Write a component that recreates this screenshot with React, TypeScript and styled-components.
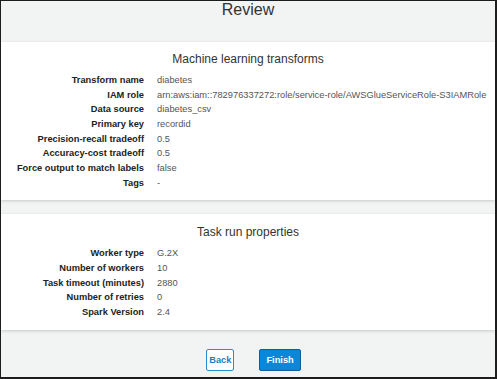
import React from 'react'
import styled, { createGlobalStyle } from 'styled-components'

const GlobalStyle = createGlobalStyle`
  body {
    margin: 0;
    font-family: "Liberation Sans", Arial, sans-serif;
    color: #333;
  }
`

const Frame = styled.div`
  box-sizing: border-box;
  width: 497px;
  height: 379px;
  border-style: solid;
  border-color: #1d1d1d;
  border-width: 1px 2px 2px 1px;
  background: #f2f3f3;
  overflow: hidden;
  display: flex;
  flex-direction: column;
`

const Header = styled.div`
  height: 41px;
  padding-top: 1px;
  box-sizing: border-box;
  text-align: center;
  font-size: 16px;
  line-height: 16px;
  color: #333;
`

const Card = styled.section<{ $top: number }>`
  background: #fff;
  padding: ${(p) => p.$top}px 0 10px;
  box-shadow: 0 1px 3px rgba(0, 0, 0, 0.18);
  & + & {
    margin-top: 14px;
  }
`

const CardTitle = styled.h2`
  margin: 0 0 7px;
  text-align: center;
  font-size: 12px;
  line-height: 14px;
  font-weight: normal;
  color: #333;
`

const Details = styled.dl`
  margin: 0;
  display: grid;
  grid-template-columns: 143px 1fr;
  column-gap: 13px;
  font-size: 9.3px;
  line-height: 14.65px;
`

const Label = styled.dt`
  text-align: right;
  font-weight: bold;
  color: #222;
  white-space: nowrap;
`

const Value = styled.dd`
  margin: 0;
  color: #555;
  white-space: nowrap;
`

const Footer = styled.div`
  display: flex;
  justify-content: center;
  gap: 25px;
  padding-top: 19px;
  padding-left: 11px;
`

const Button = styled.button<{ $primary?: boolean }>`
  box-sizing: border-box;
  height: 22px;
  padding: 0 ${(p) => (p.$primary ? 6 : 2)}px;
  font-family: "Liberation Sans", Arial, sans-serif;
  font-size: 9.3px;
  font-weight: bold;
  border-radius: 2px;
  border: 1px solid ${(p) => (p.$primary ? '#0b5f9e' : '#2a8fd0')};
  background: ${(p) => (p.$primary ? '#0a87d8' : '#fff')};
  color: ${(p) => (p.$primary ? '#fff' : '#1b7fc4')};
`

const transforms: [string, string][] = [
  ['Transform name', 'diabetes'],
  ['IAM role', 'arn:aws:iam::782976337272:role/service-role/AWSGlueServiceRole-S3IAMRole'],
  ['Data source', 'diabetes_csv'],
  ['Primary key', 'recordid'],
  ['Precision-recall tradeoff', '0.5'],
  ['Accuracy-cost tradeoff', '0.5'],
  ['Force output to match labels', 'false'],
  ['Tags', '-'],
]

const taskRun: [string, string][] = [
  ['Worker type', 'G.2X'],
  ['Number of workers', '10'],
  ['Task timeout (minutes)', '2880'],
  ['Number of retries', '0'],
  ['Spark Version', '2.4'],
]

const Section = ({ title, rows, top }: { title: string; rows: [string, string][]; top: number }) => (
  <Card $top={top}>
    <CardTitle>{title}</CardTitle>
    <Details>
      {rows.map(([k, v]) => (
        <React.Fragment key={k}>
          <Label>{k}</Label>
          <Value>{v}</Value>
        </React.Fragment>
      ))}
    </Details>
  </Card>
)

export default function App() {
  return (
    <>
      <GlobalStyle />
      <Frame>
        <Header>Review</Header>
        <Section title="Machine learning transforms" rows={transforms} top={10} />
        <Section title="Task run properties" rows={taskRun} top={11} />
        <Footer>
          <Button>Back</Button>
          <Button $primary>Finish</Button>
        </Footer>
      </Frame>
    </>
  )
}
